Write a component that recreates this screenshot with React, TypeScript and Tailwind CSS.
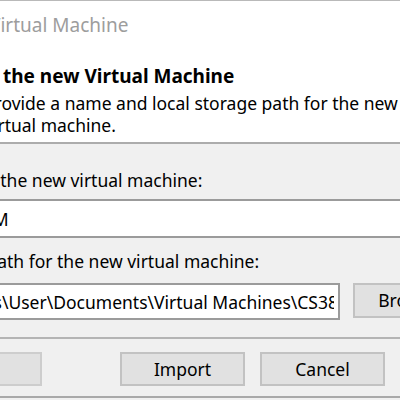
import React from "react";

function DialogButton({ label, className = "" }: { label?: string; className?: string }) {
  return (
    <button
      type="button"
      className={
        "flex h-[34px] w-[125px] items-center justify-center border-2 border-[#c2c2c2] bg-[#e1e1e1] text-[17.5px] text-black " +
        className
      }
    >
      {label}
    </button>
  );
}

export default function App() {
  return (
    <div className="h-[400px] w-[400px] overflow-hidden bg-[#f0f0f0] font-['Noto_Sans',sans-serif] text-[17.5px] text-black">
      <div className="-ml-[100px] w-[600px]">
        {/* title bar */}
        <div className="h-px bg-[#b9b9b9]" />
        <div className="flex h-[49px] items-center bg-white pl-[22px] text-[19px] text-[#9d9d9d]">
          Import Virtual Machine
        </div>

        {/* wizard header */}
        <div className="h-[92px] bg-white pt-[14px]">
          <div className="pl-[48px] text-[19px] font-bold leading-[25px]">
            Store the new Virtual Machine
          </div>
          <div className="mt-[3px] whitespace-nowrap pl-[84px] leading-[22px]">
            Provide a name and local storage path for the new
            <br />
            virtual machine.
          </div>
        </div>
        <div className="h-[2px] bg-[#acacac]" />

        {/* form */}
        <div className="pl-[18px] pr-[22px]">
          <div className="mt-[25px] leading-[22px]">Name for the new virtual machine:</div>
          <div className="ml-[3px] mt-[8px]">
            <input
              readOnly
              value="CS380 VM"
              className="block h-[39px] w-full border-2 border-[#9b9b9b] bg-white px-[4px] outline-none"
            />
          </div>
          <div className="mt-[12px] leading-[22px]">Storage path for the new virtual machine:</div>
          <div className="ml-[3px] mt-[11px] flex items-start gap-[13px]">
            <input
              readOnly
              value="C:\Users\User\Documents\Virtual Machines\CS380 VM"
              className="block h-[37px] min-w-0 flex-1 border-2 border-[#9b9b9b] bg-white pl-[10px] pr-[4px] outline-none"
            />
            <DialogButton label="Browse..." className="h-[35px]" />
          </div>
        </div>

        <div className="mt-[17px] h-[2px] bg-[#b4b4b4]" />

        {/* footer buttons */}
        <div className="mt-[13px] flex pl-[17px]">
          <DialogButton label="Help" className="border-[#cdcdcd]" />
          <DialogButton label="Import" className="ml-[78px]" />
          <DialogButton label="Cancel" className="ml-[15px]" />
        </div>
        <div className="mt-[10px] h-[2px] bg-[#a9a9a9]" />
      </div>
    </div>
  );
}
